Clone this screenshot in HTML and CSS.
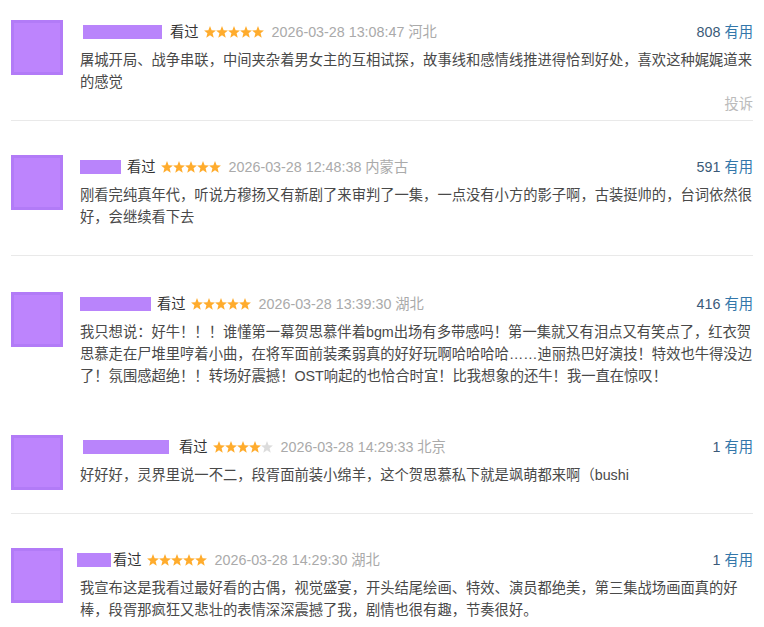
FILE: index.html
```html
<!DOCTYPE html>
<html lang="zh-CN">
<head>
    <meta charset="UTF-8">
    <meta name="viewport" content="width=device-width, initial-scale=1.0">
    <title>短评</title>
    <link rel="stylesheet" href="styles.css">
</head>
<body>
    <svg width="0" height="0" style="position:absolute">
        <symbol id="star" viewBox="0 0 10 10">
            <polygon points="5,0.1 6.35,3.45 9.95,3.65 7.15,6 8.1,9.7 5,7.65 1.9,9.7 2.85,6 0.05,3.65 3.65,3.45"/>
        </symbol>
    </svg>

    <div class="list">
        <div class="comment">
            <div class="avatar"></div>
            <div class="body">
                <div class="meta">
                    <span class="name indent" style="width:79px"></span>
                    <span class="status">看过</span>
                    <span class="stars">
                        <svg class="on"><use href="#star"/></svg><svg class="on"><use href="#star"/></svg><svg class="on"><use href="#star"/></svg><svg class="on"><use href="#star"/></svg><svg class="on"><use href="#star"/></svg>
                    </span>
                    <span class="time">2026-03-28 13:08:47 河北</span>
                    <span class="votes"><span class="count">808</span> <a href="#">有用</a></span>
                </div>
                <p class="content">屠城开局、战争串联，中间夹杂着男女主的互相试探，故事线和感情线推进得恰到好处，喜欢这种娓娓道来的感觉</p>
                <div class="actions show"><a href="#">投诉</a></div>
            </div>
        </div>

        <div class="comment">
            <div class="avatar"></div>
            <div class="body">
                <div class="meta">
                    <span class="name" style="width:41px"></span>
                    <span class="status">看过</span>
                    <span class="stars">
                        <svg class="on"><use href="#star"/></svg><svg class="on"><use href="#star"/></svg><svg class="on"><use href="#star"/></svg><svg class="on"><use href="#star"/></svg><svg class="on"><use href="#star"/></svg>
                    </span>
                    <span class="time">2026-03-28 12:48:38 内蒙古</span>
                    <span class="votes"><span class="count">591</span> <a href="#">有用</a></span>
                </div>
                <p class="content">刚看完纯真年代，听说方穆扬又有新剧了来审判了一集，一点没有小方的影子啊，古装挺帅的，台词依然很好，会继续看下去</p>
                <div class="actions"><a href="#">投诉</a></div>
            </div>
        </div>

        <div class="comment no-line">
            <div class="avatar"></div>
            <div class="body">
                <div class="meta">
                    <span class="name" style="width:71px"></span>
                    <span class="status">看过</span>
                    <span class="stars">
                        <svg class="on"><use href="#star"/></svg><svg class="on"><use href="#star"/></svg><svg class="on"><use href="#star"/></svg><svg class="on"><use href="#star"/></svg><svg class="on"><use href="#star"/></svg>
                    </span>
                    <span class="time">2026-03-28 13:39:30 湖北</span>
                    <span class="votes"><span class="count">416</span> <a href="#">有用</a></span>
                </div>
                <p class="content">我只想说：好牛！！！谁懂第一幕贺思慕伴着bgm出场有多带感吗！第一集就又有泪点又有笑点了，红衣贺思慕走在尸堆里哼着小曲，在将军面前装柔弱真的好好玩啊哈哈哈哈……迪丽热巴好演技！特效也牛得没边了！氛围感超绝！！转场好震撼！OST响起的也恰合时宜！比我想象的还牛！我一直在惊叹！</p>
                <div class="actions"><a href="#">投诉</a></div>
            </div>
        </div>

        <div class="comment tight">
            <div class="avatar"></div>
            <div class="body">
                <div class="meta">
                    <span class="name indent wide" style="width:86px"></span>
                    <span class="status">看过</span>
                    <span class="stars">
                        <svg class="on"><use href="#star"/></svg><svg class="on"><use href="#star"/></svg><svg class="on"><use href="#star"/></svg><svg class="on"><use href="#star"/></svg><svg class="off"><use href="#star"/></svg>
                    </span>
                    <span class="time">2026-03-28 14:29:33 北京</span>
                    <span class="votes"><span class="count">1</span> <a href="#">有用</a></span>
                </div>
                <p class="content">好好好，灵界里说一不二，段胥面前装小绵羊，这个贺思慕私下就是飒萌都来啊（bushi</p>
                <div class="actions"><a href="#">投诉</a></div>
            </div>
        </div>

        <div class="comment">
            <div class="avatar"></div>
            <div class="body">
                <div class="meta">
                    <span class="name short" style="width:34px"></span>
                    <span class="status">看过</span>
                    <span class="stars">
                        <svg class="on"><use href="#star"/></svg><svg class="on"><use href="#star"/></svg><svg class="on"><use href="#star"/></svg><svg class="on"><use href="#star"/></svg><svg class="on"><use href="#star"/></svg>
                    </span>
                    <span class="time">2026-03-28 14:29:30 湖北</span>
                    <span class="votes"><span class="count">1</span> <a href="#">有用</a></span>
                </div>
                <p class="content">我宣布这是我看过最好看的古偶，视觉盛宴，开头结尾绘画、特效、演员都绝美，第三集战场画面真的好棒，段胥那疯狂又悲壮的表情深深震撼了我，剧情也很有趣，节奏很好。</p>
                <div class="actions"><a href="#">投诉</a></div>
            </div>
        </div>
    </div>
</body>
</html>
```

FILE: styles.css
```css
body{
    margin: 0;
    padding: 0;
    background-color: #fff;
    font-family: "Liberation Sans", "Noto Sans CJK SC", sans-serif;
    font-size: 14.3px;
    color: #494949;
}
a{
    text-decoration: none;
}
p{
    margin: 0;
}
.list{
    padding: 0 11px;
}
.comment{
    display: flex;
    padding-top: 34px;
    border-bottom: 1px solid #e9e9e9;
}
.comment:first-child{
    padding-top: 20px;
}
.comment.no-line{
    padding-top: 36px;
    border-bottom-color: transparent;
}
.comment.tight{
    padding-top: 20px;
}
.avatar{
    flex: none;
    width: 52px;
    height: 55px;
    margin-right: 17px;
    background-color: #bd84fd;
    box-shadow: inset 0 0 0 3px #b27bf7;
}
.body{
    flex: 1;
    min-width: 0;
}
.meta{
    display: flex;
    align-items: center;
    height: 22px;
    line-height: 22px;
    margin-top: 1px;
}
.name{
    display: inline-block;
    height: 14px;
    margin-right: 6px;
    background-color: #b984fb;
}
.name.indent{
    margin-left: 3px;
    margin-right: 8px;
}
.name.wide{
    margin-right: 10px;
}
.name.short{
    margin-left: -3px;
    margin-right: 2px;
}
.status{
    color: #333;
    margin-right: 5px;
}
.stars{
    display: inline-flex;
    margin-right: 8px;
}
.stars svg{
    width: 12px;
    height: 12px;
}
.stars .on{
    fill: #ffac2d;
}
.stars .off{
    fill: #dcdcdc;
}
.time{
    color: #aaa;
}
.votes{
    margin-left: auto;
}
.votes .count{
    color: #3b5a78;
}
.votes a{
    color: #3377aa;
}
.content{
    margin-top: 6px;
    line-height: 22px;
    color: #494949;
}
.actions{
    height: 22px;
    line-height: 22px;
    margin-bottom: 5px;
    text-align: right;
    visibility: hidden;
}
.actions a{
    color: #bbb;
}
.actions.show{
    visibility: visible;
}
```
